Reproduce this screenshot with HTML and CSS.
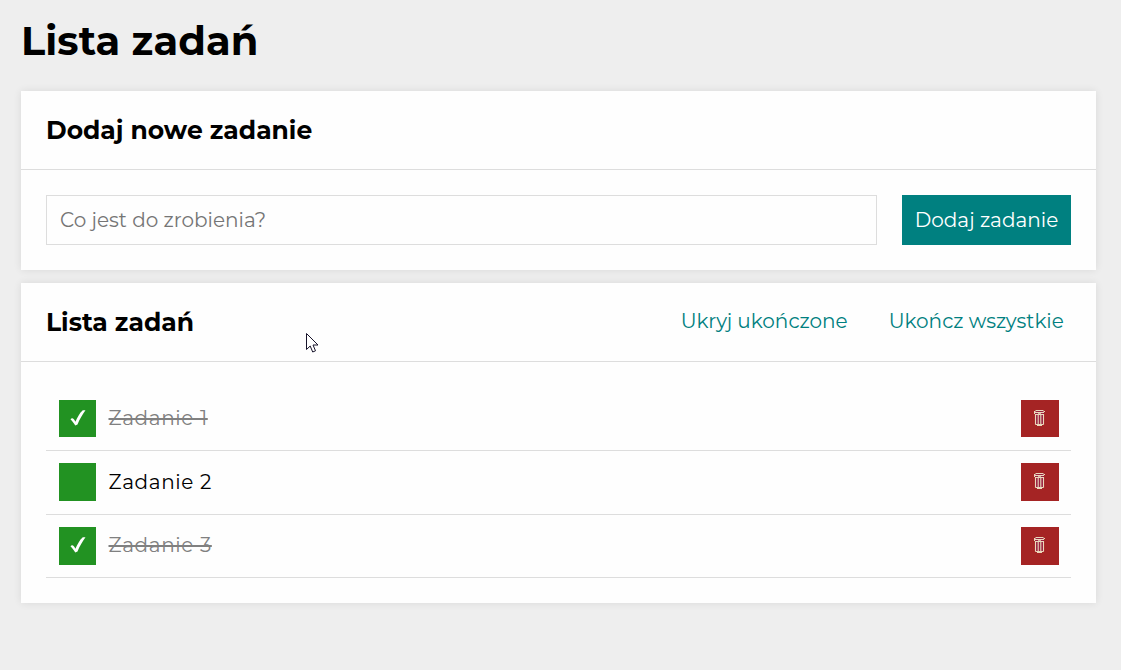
FILE: index.html
```html
<!DOCTYPE html>
<html lang="pl">
<head>
<meta charset="utf-8">
<title>Lista zadań</title>
<link rel="stylesheet" href="styles.css">
</head>
<body>
<svg class="sprite" aria-hidden="true">
  <symbol id="check" viewBox="0 0 16 18"><path d="M.5 10.200C2.300 8.300 4 9.700 5.400 12.800C7.500 8.200 9.500 4 12.800 1.200L15.500 1.200C12.500 5.500 9.700 10 7.500 15.500L5.300 16.500C3.700 14 2.400 12 .5 10.200Z"/></symbol>
  <symbol id="bin" viewBox="0 0 12 17"><path class="bin-fill" d="M1 1h9v13H1z"/><path class="bin-line" d="M1.500.5h8M0 1.500h1.500M9.500 1.500H11M1 2.500h9M0 2.500h1M.5 1v3M4 3.300h3M1 4.500h9M1.500 4v10.500M9.500 4v10.500M1.500 14.500h8M3 15.500h5"/><path class="bin-bar" d="M4.200 5v9M6.800 5v9"/></symbol>
</svg>
<main class="container">
  <h1 class="title"><span>Lista zadań</span></h1>
  <section class="card">
    <header class="card-header"><h2 class="subtitle subtitle-new">Dodaj nowe zadanie</h2></header>
    <form class="form">
      <input class="input" placeholder="Co jest do zrobienia?">
      <button class="add" type="button">Dodaj zadanie</button>
    </form>
  </section>
  <section class="card">
    <header class="card-header">
      <h2 class="subtitle">Lista zadań</h2>
      <div class="actions"><button class="link link-hide" type="button">Ukryj ukończone</button><button class="link link-finish" type="button">Ukończ wszystkie</button></div>
    </header>
    <ul class="list">
      <li class="item"><button class="box" type="button"><svg class="check"><use href="#check"/></svg></button><span class="task done">Zadanie 1</span><button class="box remove" type="button"><svg class="bin"><use href="#bin"/></svg></button></li>
      <li class="item"><button class="box" type="button"></button><span class="task">Zadanie 2</span><button class="box remove" type="button"><svg class="bin"><use href="#bin"/></svg></button></li>
      <li class="item"><button class="box" type="button"><svg class="check"><use href="#check"/></svg></button><span class="task done">Zadanie 3</span><button class="box remove" type="button"><svg class="bin"><use href="#bin"/></svg></button></li>
    </ul>
  </section>
</main>
<svg class="cursor" viewBox="0 0 13 20"><path d="M.5.5v16l3.700-3.500 2.500 6 2.800-1.200-2.500-5.800h5z"/></svg>
</body>
</html>
```

FILE: styles.css
```css
* { box-sizing: border-box; }
body { margin: 0; background: #eee; color: #000; font: 400 20px/25px Montserrat, Inter, sans-serif; }
button, input { font: inherit; border: 0; padding: 0; margin: 0; }
.sprite { display: none; }
.container { padding: 16px 25px 0 21px; }
.title { margin: 0 0 25px; height: 50px; font-size: 40px; line-height: 50px; font-weight: 700; letter-spacing: .08px; white-space: nowrap; }
.card { background: #fefefe; box-shadow: 0 0 8px rgba(0, 0, 0, .09); margin-bottom: 13px; }
.card-header { height: 79px; padding: 0 25px; border-bottom: 1px solid #ddd; display: flex; align-items: center; justify-content: space-between; }
.subtitle { margin: 0; font-size: 25px; font-weight: 700; line-height: 30px; white-space: nowrap; }
.form { display: flex; gap: 25px; padding: 25px; }
.input { flex: 1; min-width: 0; height: 50px; padding: 0 13px; border: 1px solid #ddd; background: #fefefe; }
.input::placeholder { color: #757575; opacity: 1; }
.add { width: 169px; height: 50px; background: teal; color: #fff; white-space: nowrap; }
.actions { display: flex; gap: 41px; padding: 0 8.3px 2px 0; }
.link { background: none; color: teal; white-space: nowrap; text-align: left; }
.link-hide { width: 167px; }
.link-finish { width: 174px; }
.list { list-style: none; margin: 0; padding: 25.35px 25px 24.85px; }
.item { height: 63.6px; padding: 12.5px; border-bottom: 1px solid #ddd; display: flex; align-items: center; }
.box { width: 37.5px; height: 37.5px; flex: none; align-self: flex-start; background: #229222; display: flex; align-items: center; justify-content: center; }
.remove { background: #a52424; margin-left: auto; }
.task { margin-left: 12.5px; white-space: nowrap; letter-spacing: .625px; }
.done { color: #808080; text-decoration: line-through 2px; }
.check { width: 16px; height: 18px; margin: 0 0 1px .5px; fill: #fff; }
.bin { width: 12px; height: 17px; margin-bottom: 1px; }
.bin-fill { fill: #9a2040; }
.bin-line, .bin-bar { fill: none; stroke: #ead9bc; stroke-width: 1.1; }
.cursor { position: absolute; left: 306px; top: 333px; width: 13px; height: 20px; fill: #fff; stroke: #17132a; stroke-width: 1; }
```
